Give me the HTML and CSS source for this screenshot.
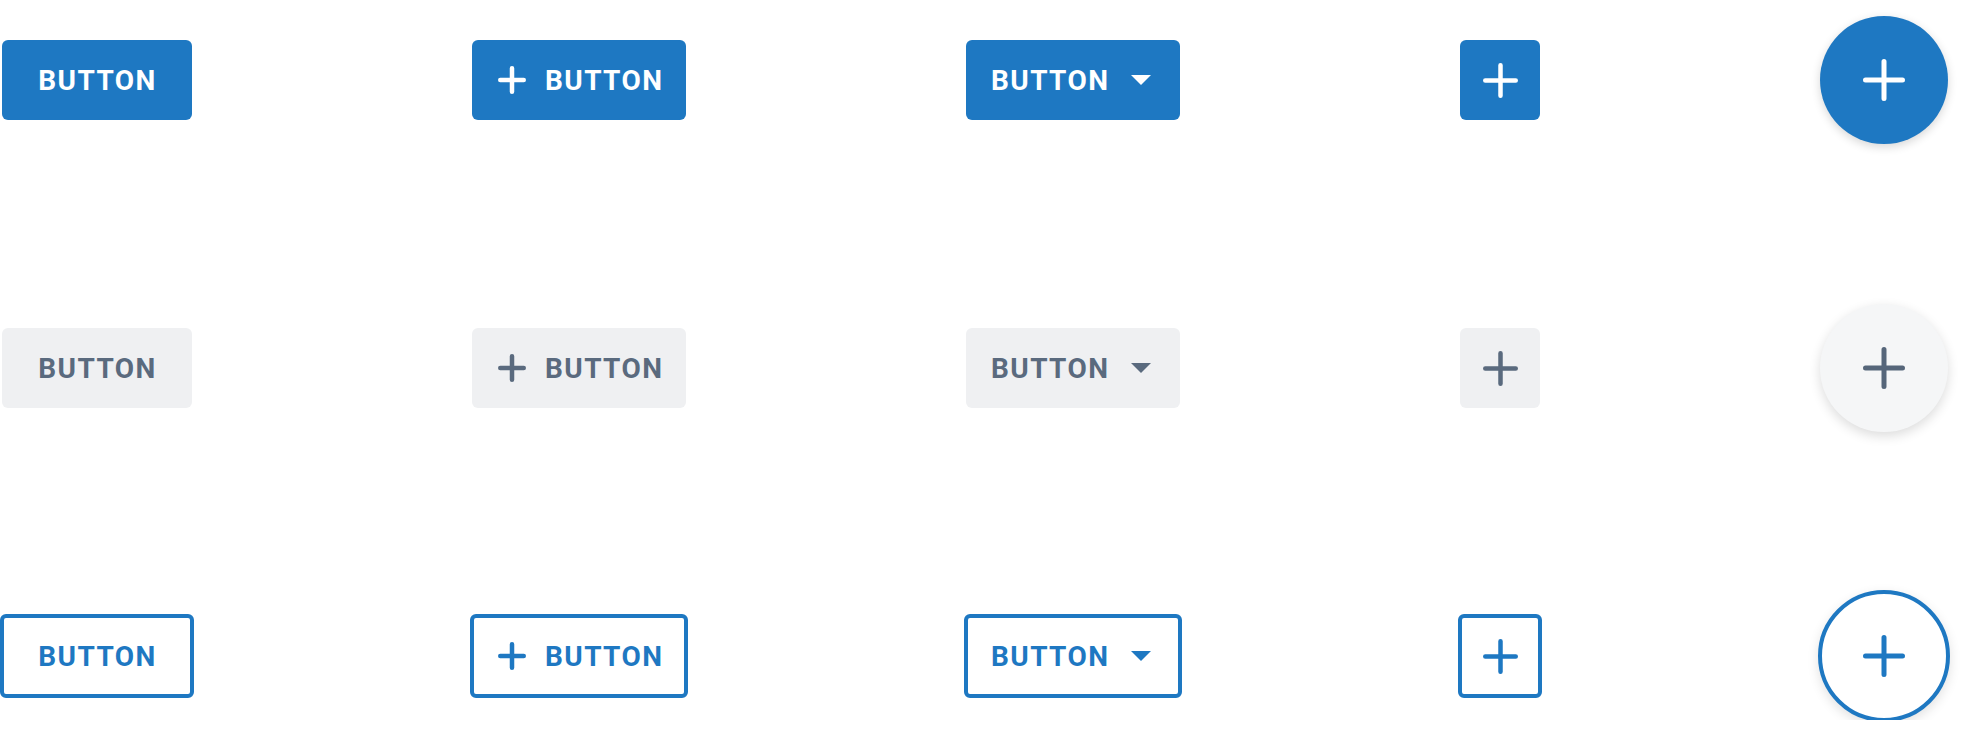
FILE: index.html
```html
<!DOCTYPE html>
<html lang="en">
<head>
<meta charset="utf-8">
<title>Buttons</title>
<link rel="stylesheet" href="styles.css">
</head>
<body>
<main class="board">
  <div class="row">
    <button class="btn btn-filled btn-text">BUTTON</button>
    <button class="btn btn-filled btn-lead"><svg class="ico-plus" width="28" height="28" viewBox="0 0 28 28"><path d="M14 2.25v23.5M2.25 14h23.5"/></svg><span>BUTTON</span></button>
    <button class="btn btn-filled btn-trail"><span>BUTTON</span><svg class="ico-caret" width="20" height="10" viewBox="0 0 20 10"><path d="M0 0h20L10 10z"/></svg></button>
    <button class="btn btn-filled btn-icon"><svg class="ico-plus" width="35" height="35" viewBox="0 0 35 35"><path d="M17.5 2.25v30.5M2.25 17.5h30.5"/></svg></button>
    <button class="fab fab-filled"><svg class="ico-plus fab-plus" width="42" height="42" viewBox="0 0 42 42"><path d="M21 2.5v37M2.5 21h37"/></svg></button>
  </div>
  <div class="row">
    <button class="btn btn-tonal btn-text">BUTTON</button>
    <button class="btn btn-tonal btn-lead"><svg class="ico-plus" width="28" height="28" viewBox="0 0 28 28"><path d="M14 2.25v23.5M2.25 14h23.5"/></svg><span>BUTTON</span></button>
    <button class="btn btn-tonal btn-trail"><span>BUTTON</span><svg class="ico-caret" width="20" height="10" viewBox="0 0 20 10"><path d="M0 0h20L10 10z"/></svg></button>
    <button class="btn btn-tonal btn-icon"><svg class="ico-plus" width="35" height="35" viewBox="0 0 35 35"><path d="M17.5 2.25v30.5M2.25 17.5h30.5"/></svg></button>
    <button class="fab fab-tonal"><svg class="ico-plus fab-plus" width="42" height="42" viewBox="0 0 42 42"><path d="M21 2.5v37M2.5 21h37"/></svg></button>
  </div>
  <div class="row">
    <button class="btn btn-outline btn-text">BUTTON</button>
    <button class="btn btn-outline btn-lead"><svg class="ico-plus" width="28" height="28" viewBox="0 0 28 28"><path d="M14 2.25v23.5M2.25 14h23.5"/></svg><span>BUTTON</span></button>
    <button class="btn btn-outline btn-trail"><span>BUTTON</span><svg class="ico-caret" width="20" height="10" viewBox="0 0 20 10"><path d="M0 0h20L10 10z"/></svg></button>
    <button class="btn btn-outline btn-icon"><svg class="ico-plus" width="35" height="35" viewBox="0 0 35 35"><path d="M17.5 2.25v30.5M2.25 17.5h30.5"/></svg></button>
    <button class="fab fab-outline"><svg class="ico-plus fab-plus" width="42" height="42" viewBox="0 0 42 42"><path d="M21 2.5v37M2.5 21h37"/></svg></button>
  </div>
</main>
</body>
</html>
```

FILE: styles.css
```css
html, body {
  margin: 0;
  padding: 0;
  background: #ffffff;
}

body {
  font-family: Roboto, "Liberation Sans", sans-serif;
}

.board {
  display: flex;
  flex-direction: column;
  gap: 160px;
  padding: 16px 0 0 2px;
}

.row {
  display: flex;
  align-items: center;
  gap: 280px;
  height: 128px;
}

.btn {
  display: inline-flex;
  align-items: center;
  box-sizing: border-box;
  height: 80px;
  border: none;
  border-radius: 6px;
  padding: 2px 0 0 0;
  margin: 0;
  font-family: Roboto, "Liberation Sans", sans-serif;
  font-weight: 700;
  font-size: 28px;
  letter-spacing: 1.4px;
  line-height: 1;
  cursor: pointer;
}

.btn-text {
  width: 190px;
  justify-content: center;
  padding-left: 1px;
}

.btn-lead {
  width: 214px;
  padding-left: 26px;
  gap: 19px;
}

.btn-trail {
  width: 214px;
  padding-left: 25px;
  gap: 22px;
}

.btn-icon {
  width: 80px;
  justify-content: center;
  padding: 0;
}

.btn-lead .ico-plus,
.btn-trail .ico-caret {
  margin-top: -2px;
}

.ico-plus {
  display: block;
  fill: none;
  stroke: currentColor;
  stroke-width: 4.5;
  stroke-linecap: round;
}

.fab-plus {
  stroke-width: 5;
}

.ico-caret {
  display: block;
  fill: currentColor;
}

.btn-filled {
  background: #1e78c2;
  color: #ffffff;
}

.btn-tonal {
  background: #eff0f2;
  color: #5a6a7e;
}

.btn-outline {
  background: #ffffff;
  color: #1e78c2;
  border: 4px solid #1e78c2;
  margin: -2px;
  height: 84px;
}

.btn-outline.btn-text { width: 194px; }
.btn-outline.btn-lead { width: 218px; padding-left: 24px; }
.btn-outline.btn-trail { width: 218px; padding-left: 23px; }
.btn-outline.btn-icon { width: 84px; height: 84px; }

.fab {
  display: flex;
  align-items: center;
  justify-content: center;
  box-sizing: border-box;
  width: 128px;
  height: 128px;
  border-radius: 50%;
  border: none;
  padding: 0;
  margin: 0;
  cursor: pointer;
}

.fab-filled {
  background: #1e78c2;
  color: #ffffff;
  box-shadow: 0 3px 10px rgba(0, 0, 0, 0.16);
}

.fab-tonal {
  background: #f5f6f7;
  color: #56667a;
  box-shadow: 0 4px 12px rgba(0, 0, 0, 0.14);
}

.fab-outline {
  background: #ffffff;
  color: #1e78c2;
  border: 4px solid #1e78c2;
  width: 132px;
  height: 132px;
  margin: -2px;
  box-shadow: 0 4px 12px rgba(0, 0, 0, 0.12);
}
```
